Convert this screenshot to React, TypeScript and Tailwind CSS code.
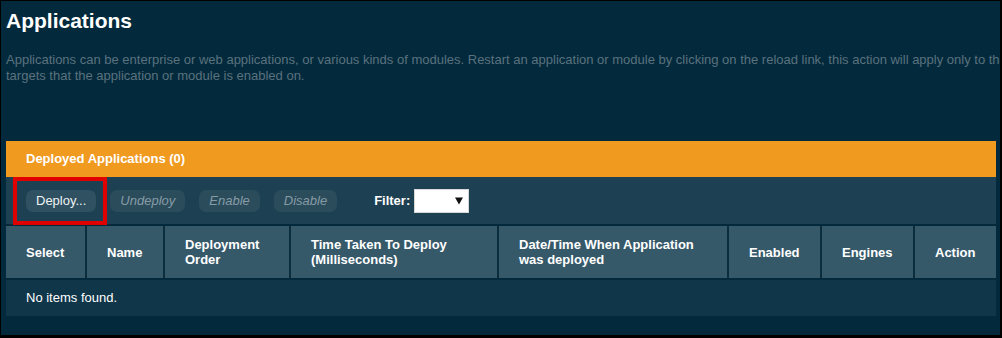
import React from "react";

const columns = [
  { label: "Select", width: "w-[79px]" },
  { label: "Name", width: "w-[76px]" },
  { label: "Deployment Order", width: "w-[124px]" },
  { label: "Time Taken To Deploy (Milliseconds)", width: "w-[206px]" },
  { label: "Date/Time When Application was deployed", width: "w-[228px]" },
  { label: "Enabled", width: "w-[91px]" },
  { label: "Engines", width: "w-[91px]" },
  { label: "Action", width: "w-[81px]" },
];

function ToolButton({ label, disabled }: { label: string; disabled?: boolean }) {
  return (
    <button
      className={
        disabled
          ? "h-[22px] px-[10px] rounded-[7px] bg-[#2b4c5b] text-[13px] italic text-[#869ba6] leading-none"
          : "h-[22px] px-[10px] rounded-[7px] bg-[#2f5161] text-[13px] text-[#eef3f5] leading-none"
      }
    >
      {label}
    </button>
  );
}

export default function App() {
  return (
    <div
      className="w-[1002px] h-[338px] overflow-hidden bg-[#022a3c] border-l border-t border-r-2 border-b-[3px] border-black"
      style={{ fontFamily: '"Liberation Sans", Arial, sans-serif' }}
    >
      <div className="pl-[5px]">
        <h1 className="mt-[8px] text-[21px] leading-[24px] font-bold text-white">Applications</h1>
        <p className="mt-[19px] w-[1012px] text-[13px] leading-[16px] text-[#5b717e]">
          Applications can be enterprise or web applications, or various kinds of modules. Restart an application or
          module by clicking on the reload link, this action will apply only to the targets that the application or
          module is enabled on.
        </p>

        <div className="mt-[57px] w-[990px]">
          {/* Panel title */}
          <div className="h-[36px] bg-[#f09a1f] flex items-center pl-5 text-[13px] font-bold text-white">
            Deployed Applications (0)
          </div>

          {/* Toolbar */}
          <div className="relative h-[47px] bg-[#1d4152] flex items-center pl-5">
            <div className="flex items-center gap-[14px]">
              <ToolButton label="Deploy..." />
              <ToolButton label="Undeploy" disabled />
              <ToolButton label="Enable" disabled />
              <ToolButton label="Disable" disabled />
            </div>
            <span className="ml-[37px] text-[13px] font-bold text-white">Filter:</span>
            <div className="ml-[4px] w-[55px] h-[24px] bg-white border border-[#d8d8d8] flex items-center justify-end pr-[5px]">
              <svg width="8" height="8" viewBox="0 0 8 8">
                <path d="M0 0.5 H8 L4 7.5 Z" fill="#111" />
              </svg>
            </div>
            {/* highlight annotation */}
            <div className="absolute left-[7px] top-0 w-[94px] h-[48px] border-4 border-[#e00000]" />
          </div>

          {/* Table */}
          <div className="mt-[2px] flex gap-[2px] bg-[#0c2d3c]">
            {columns.map((c) => (
              <div
                key={c.label}
                className={`${c.width} h-[52px] bg-[#36596a] flex items-center pl-5 pr-2 text-[13px] leading-[15px] font-bold text-white`}
              >
                {c.label}
              </div>
            ))}
          </div>
          <div className="mt-[2px] h-[36px] bg-[#0f3649] flex items-center pl-5 text-[13px] text-white">
            No items found.
          </div>
        </div>
      </div>
    </div>
  );
}
